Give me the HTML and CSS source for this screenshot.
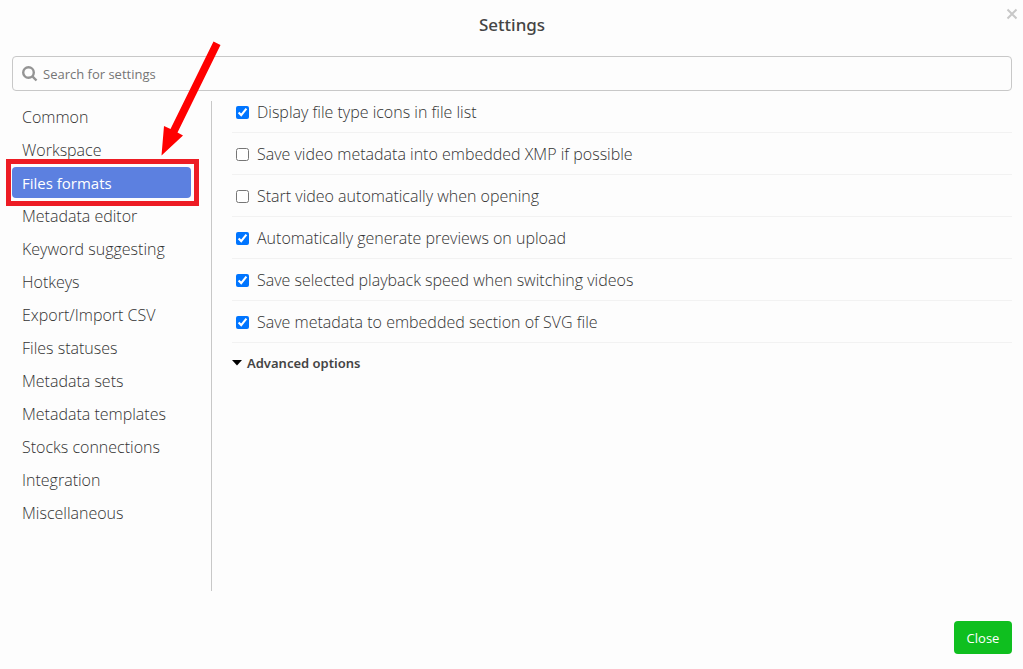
FILE: index.html
```
<!DOCTYPE html>
<html lang="en">
<head>
<meta charset="utf-8">
<meta name="viewport" content="width=device-width, initial-scale=1">
<title>Settings</title>
<link rel="stylesheet" href="styles.css">
</head>
<body>
<main class="dialog">
  <header class="dialog-header">
    <h1 class="dialog-title">Settings</h1>
    <button class="dismiss" type="button" aria-label="Dismiss">
      <svg class="dismiss-icon" viewBox="0 0 12 12" aria-hidden="true"><path d="M1.500 1.500 10.500 10.500M10.500 1.500 1.500 10.500"/></svg>
    </button>
  </header>

  <div class="search">
    <svg class="search-icon" viewBox="0 0 16 16" aria-hidden="true"><circle cx="6.500" cy="6.500" r="5.300"/><path d="M10.400 10.400 14.500 14.500"/></svg>
    <input class="search-input" type="text" placeholder="Search for settings" aria-label="Search for settings">
  </div>

  <div class="panes">
    <nav class="sections" aria-label="Settings sections">
      <a class="section" href="#common">Common</a>
      <a class="section" href="#workspace">Workspace</a>
      <a class="section section-active" href="#formats" aria-current="page">Files formats
        <span class="callout"></span>
        <svg class="callout-arrow" viewBox="0 0 62 116" aria-hidden="true"><path d="M53.500 0.500 60.500 4 17.500 91.500 23 94.500 1.500 114.500 4 85 10.500 88Z"/></svg>
      </a>
      <a class="section" href="#metadata-editor">Metadata editor</a>
      <a class="section" href="#keywords">Keyword suggesting</a>
      <a class="section" href="#hotkeys">Hotkeys</a>
      <a class="section" href="#csv">Export/Import CSV</a>
      <a class="section" href="#statuses">Files statuses</a>
      <a class="section" href="#metadata-sets">Metadata sets</a>
      <a class="section" href="#templates">Metadata templates</a>
      <a class="section" href="#stocks">Stocks connections</a>
      <a class="section" href="#integration">Integration</a>
      <a class="section" href="#misc">Miscellaneous</a>
    </nav>

    <section class="options" aria-label="Files formats">
      <label class="option"><input class="tick" type="checkbox" checked>Display file type icons in file list</label>
      <label class="option"><input class="tick" type="checkbox">Save video metadata into embedded XMP if possible</label>
      <label class="option"><input class="tick" type="checkbox">Start video automatically when opening</label>
      <label class="option"><input class="tick" type="checkbox" checked>Automatically generate previews on upload</label>
      <label class="option"><input class="tick" type="checkbox" checked>Save selected playback speed when switching videos</label>
      <label class="option"><input class="tick" type="checkbox" checked>Save metadata to embedded section of SVG file</label>
      <button class="advanced" type="button" aria-expanded="true">
        <svg class="caret" viewBox="0 0 10 6" aria-hidden="true"><path d="M0 0H10L5 5.500Z"/></svg>
        Advanced options
      </button>
    </section>
  </div>

  <footer class="dialog-footer">
    <button class="close" type="button">Close</button>
  </footer>
</main>
</body>
</html>
```
FILE: styles.css
```
* {
  box-sizing: border-box;
}

body {
  margin: 0;
  background: #fdfdfd;
  color: #333;
  font-family: "Open Sans", "Noto Sans", sans-serif;
  font-size: 16px;
  line-height: 21px;
}

button,
input {
  font-family: inherit;
}

.dialog {
  display: flex;
  flex-direction: column;
  min-height: 100vh;
  padding: 0 11px 15px 12px;
}

.dialog-header {
  position: relative;
  padding: 14px 0 20px;
}

.dialog-title {
  margin: 0;
  font-family: "Noto Sans", "Open Sans", sans-serif;
  font-size: 17px;
  font-weight: 500;
  line-height: 22px;
  text-align: center;
  color: #444;
}

.dismiss {
  position: absolute;
  top: 8px;
  right: -6px;
  display: flex;
  padding: 0;
  border: 0;
  background: none;
}

.dismiss-icon {
  width: 12px;
  height: 12px;
  fill: none;
  stroke: #c8c8c8;
  stroke-width: 2;
}

.search {
  display: flex;
  align-items: center;
  gap: 5px;
  height: 35px;
  padding: 0 9px;
  border: 1px solid #c8c8c8;
  border-radius: 4px;
  background: #fdfdfd;
}

.search-icon {
  width: 16px;
  height: 16px;
  fill: none;
  stroke: #949494;
  stroke-width: 2.400;
}

.search-input {
  flex: 1;
  min-width: 0;
  padding: 0;
  border: 0;
  outline: 0;
  background: none;
  color: #444;
  font-size: 13px;
  line-height: 20px;
}

.search-input::placeholder {
  color: #757575;
}

.panes {
  display: flex;
  flex: 1;
  gap: 20px;
}

.sections {
  display: flex;
  flex-direction: column;
  gap: 2px;
  flex: 0 0 200px;
  margin-top: 10px;
  padding-right: 20px;
  border-right: 1px solid #c8c8c8;
}

.section {
  position: relative;
  padding: 6px 10px 4px;
  border-radius: 4px;
  color: #333;
  font-weight: 300;
  text-decoration: none;
}

.section-active {
  background: #5c80e0;
  color: #fff;
  font-size: 15px;
  font-weight: 400;
}

.callout {
  position: absolute;
  inset: -8px -8px -8px -6px;
  border: 5px solid #ed1c24;
}

.callout-arrow {
  position: absolute;
  top: -126px;
  left: 148px;
  width: 62px;
  height: 116px;
  fill: #f00;
}

.options {
  flex: 1;
  min-width: 0;
}

.option {
  display: flex;
  align-items: center;
  gap: 8px;
  height: 42px;
  padding: 2px 0 0 4px;
  border-bottom: 1px solid #f2f2f2;
  font-weight: 300;
}

.tick {
  width: 13px;
  height: 13px;
  margin: 0;
}

.advanced {
  display: flex;
  align-items: center;
  gap: 5px;
  padding: 10px 0;
  border: 0;
  background: none;
  color: #444;
  font-family: "Noto Sans", "Open Sans", sans-serif;
  font-size: 13px;
  font-weight: 600;
  line-height: 20px;
}

.caret {
  width: 10px;
  height: 6px;
  fill: #000;
}

.dialog-footer {
  display: flex;
  justify-content: flex-end;
  padding-top: 30px;
}

.close {
  min-width: 58px;
  padding: 7px 12px 6px;
  border: 0;
  border-radius: 4px;
  background: #0fbf1f;
  color: #fff;
  font-size: 13px;
  line-height: 20px;
}
```
